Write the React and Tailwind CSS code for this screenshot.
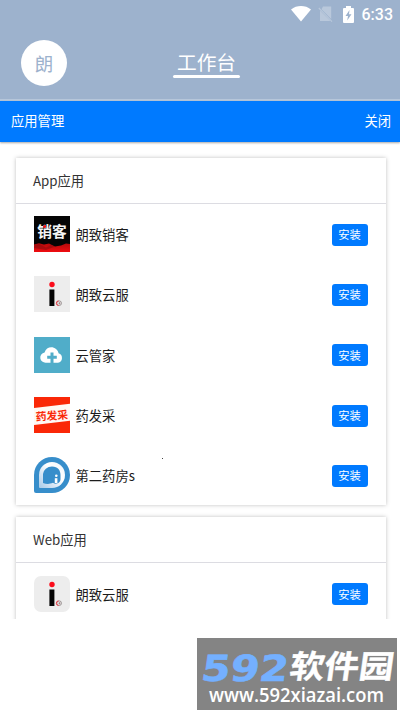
import React from 'react';

const FONTS = "font-['Noto_Sans_CJK_SC',sans-serif]";

function StatusBar() {
  return (
    <div className="flex h-[28px] items-center justify-end pr-[7px] text-white">
      <svg width="20" height="16" viewBox="0 0 20 16" className="mr-[7px]">
        <path d="M0 3.4C5.8-1.1 14.2-1.1 20 3.4L10 15.5Z" fill="white" />
      </svg>
      <svg width="15" height="17" viewBox="0 0 15 17" className="mr-[10px]">
        <path d="M5 0.5H13.2V13L3.5 3.2ZM2 4.5L12.5 15H2Z" fill="#b9c8db" />
        <path d="M0.8 2L14 15.6" stroke="#b9c8db" strokeWidth="1.1" />
      </svg>
      <svg width="11" height="17" viewBox="0 0 11 17" className="mr-[8px]">
        <path d="M3 0H8V2H10Q11 2 11 3V16Q11 17 10 17H1Q0 17 0 16V3Q0 2 1 2H3Z" fill="white" />
        <path d="M6.5 4L2.5 10H5L4.2 14.5L8.5 8.2H6Z" fill="#9db2cd" />
      </svg>
      <span className="pt-[1px] font-[Roboto,sans-serif] text-[16px] leading-none font-medium">6:33</span>
    </div>
  );
}

function DotIcon({ rounded }) {
  return (
    <svg width="36" height="36" viewBox="0 0 36 36" className={rounded ? 'rounded-[7px]' : ''}>
      <rect width="36" height="36" fill="#ededed" />
      <circle cx="18" cy="8.5" r="2.7" fill="#fb0d1b" />
      <rect x="15.4" y="13.5" width="5" height="16.5" fill="#050505" />
      <circle cx="25.2" cy="27.2" r="2.3" fill="none" stroke="#706565" strokeWidth="0.6" />
      <path d="M24.6 24.9A2.3 2.3 0 0 0 24.6 29.5" fill="none" stroke="#f0303a" strokeWidth="0.9" />
      <path d="M24.4 27.2H26.4M25.6 26.2V28.4" stroke="#8c5c60" strokeWidth="0.6" />
    </svg>
  );
}

function SalesIcon() {
  return (
    <svg width="36" height="36" viewBox="0 0 36 36">
      <defs>
        <linearGradient id="hill" x1="0" x2="0" y1="0" y2="1">
          <stop offset="0" stopColor="#b00b0b" />
          <stop offset="1" stopColor="#f00c10" />
        </linearGradient>
      </defs>
      <rect width="36" height="36" fill="#050505" />
      <path d="M0 28.5L5 27.2L10 28.5L15 27.5L21 30.5L27 29.5L32 27.5L36 28V36H0Z" fill="url(#hill)" />
      <path d="M0 29.5L5 28L12 31.5L17 29L21 30.5L12 34L0 32Z" fill="#8d0b0d" opacity="0.6" />
      <text x="3.3" y="20.9" fontFamily="Noto Sans CJK SC" fontSize="14.7" fontWeight="700" fill="#f5f5f5">销客</text>
      <circle cx="10.6" cy="10.6" r="1.5" fill="#f01216" />
    </svg>
  );
}

function CloudIcon() {
  return (
    <svg width="36" height="36" viewBox="0 0 36 36">
      <rect width="36" height="36" fill="#50adc9" />
      <path d="M12 25.7A5.2 5.2 0 0 1 10.6 15.4C12 10.5 18 8.7 22 12.1C23.5 13.3 24.3 14.7 24.5 16.2A4.9 4.9 0 0 1 24 25.7Z" fill="white" />
      <path d="M16.5 15.5H19.5V18.8H22.8V21.8H19.5V26H16.5V21.8H13.2V18.8H16.5Z" fill="#50adc9" />
    </svg>
  );
}

function MedicineIcon() {
  return (
    <svg width="36" height="36" viewBox="0 0 36 36">
      <rect width="36" height="36" fill="#fa2807" />
      <path d="M0 11L36 6.8V23.8L0 28Z" fill="#fff8f4" />
      <text x="2" y="23.8" transform="rotate(-4 2 23.8)" fontFamily="Noto Sans CJK SC" fontSize="10.8" fontWeight="700" fill="#fa2807">药发采</text>
    </svg>
  );
}

function PharmacyIcon() {
  return (
    <svg width="36" height="36" viewBox="0 0 36 36">
      <defs>
        <linearGradient id="ring" x1="0" x2="1" y1="1" y2="0">
          <stop offset="0" stopColor="#a8cbe8" />
          <stop offset="0.3" stopColor="#d3e4f4" />
          <stop offset="0.6" stopColor="#ffffff" />
          <stop offset="1" stopColor="#eef5fb" />
        </linearGradient>
      </defs>
      <path d="M2 36Q0 36 0 34V18A18 18 0 1 1 18 36Z" fill="#378ecb" />
      <path d="M6 31Q5 31 5 30V18A13 13 0 1 1 18 31Z" fill="url(#ring)" />
      <path d="M9 26V17A9 8 0 0 1 18 9.5C24 9.5 26.5 13.5 26.5 18V22C26.5 26 22 28 19 25.8C15 27.5 12 27 9 26Z" fill="#378ecb" />
      <circle cx="22.3" cy="18.8" r="1.3" fill="white" />
      <path d="M20.8 21.2H23.4V26H20.8Z" fill="white" />
    </svg>
  );
}

function AppRow({ icon, name }) {
  return (
    <div className="flex h-[60.3px] items-center pr-[18.5px] pl-[18px]">
      {icon}
      <span className="ml-[5.5px] flex-1 pt-[2px] text-[13.3px] leading-5 text-[#1c1c1c]">{name}</span>
      <button className="mt-[1px] h-[22px] w-[36px] rounded-[3px] bg-[#007aff] text-center text-[11.3px] leading-[21px] text-white">安装</button>
    </div>
  );
}

function Card({ title, children }) {
  return (
    <section className="ml-[16px] w-[370px] bg-white shadow-[0_0_4px_rgba(0,0,0,0.25)]">
      <h2 className="h-[46px] border-b border-[#dcdce2] pl-[17px] text-[13.3px] leading-[46px] text-[#333]">{title}</h2>
      {children}
    </section>
  );
}

export default function App() {
  return (
    <div className={`relative h-[711px] w-[400px] overflow-hidden bg-white ${FONTS}`}>
      <main className="h-[619px] overflow-hidden">
        <header className="h-[101px] border-b-2 border-[#b6c6da] bg-[#9db2cd]">
          <StatusBar />
          <div className="grid grid-cols-3 pt-[12px]">
            <div className="ml-[21px] h-[46px] w-[46px] rounded-full bg-white text-center text-[18.5px] leading-[46px] text-[#9db2cd]">朗</div>
            <div className="flex flex-col items-center pl-[13px] text-white">
              <h1 className="h-[35px] text-[19.7px] leading-[43px]">工作台</h1>
              <div className="h-[3px] w-[67px] rounded-full bg-white" />
            </div>
          </div>
        </header>
        <nav className="flex h-[41px] items-center justify-between bg-[#007aff] pr-[9px] pb-[1px] pl-[11px] text-[13.3px] text-white shadow-[0_1px_2px_rgba(0,0,0,0.35)]">
          <span>应用管理</span>
          <span>关闭</span>
        </nav>
        <div className="flex flex-col gap-[12px] pt-[16px]">
          <Card title="App应用">
            <AppRow icon={<SalesIcon />} name="朗致销客" />
            <AppRow icon={<DotIcon />} name="朗致云服" />
            <AppRow icon={<CloudIcon />} name="云管家" />
            <AppRow icon={<MedicineIcon />} name="药发采" />
            <AppRow icon={<PharmacyIcon />} name="第二药房s" />
          </Card>
          <Card title="Web应用">
            <AppRow icon={<DotIcon rounded />} name="朗致云服" />
          </Card>
        </div>
      </main>
      <div className="absolute top-[458px] left-[162px] h-px w-px bg-[#444]" />
      <footer className="mt-[19px] ml-[197px] h-[72px] w-[200px] bg-[#848484]">
        <svg width="200" height="72" viewBox="0 0 200 72">
          <g transform="translate(0 43) skewX(-8)">
            <text x="3" y="-0.5" fontFamily="DejaVu Sans" fontSize="36" fontWeight="700" fill="#74b0ff" stroke="#74b0ff" strokeWidth="0.6" textLength="87" lengthAdjust="spacingAndGlyphs">592</text>
            <text x="91" y="-3" fontFamily="Noto Sans CJK SC" fontSize="32" fontWeight="700" fill="white" stroke="white" strokeWidth="0.4" textLength="104" lengthAdjust="spacingAndGlyphs">软件园</text>
          </g>
          <text x="12" y="64" fontFamily="Open Sans" fontSize="19.5" fontWeight="600" fill="white" textLength="175" lengthAdjust="spacingAndGlyphs">www.592xiazai.com</text>
        </svg>
      </footer>
    </div>
  );
}
